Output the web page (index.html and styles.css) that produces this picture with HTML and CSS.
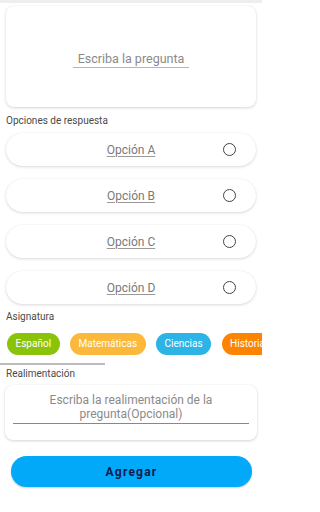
FILE: index.html
```html
<!DOCTYPE html>
<html lang="es">
<head>
<meta charset="utf-8">
<link rel="stylesheet" href="styles.css">
</head>
<body>
<div class="topbar"></div>
<main class="page">
  <section class="card question">
    <span class="field">Escriba la pregunta</span>
  </section>

  <div class="label label-options">Opciones de respuesta</div>

  <div class="options">
    <div class="option"><span class="opt-text">Opción A</span><span class="radio"></span></div>
    <div class="option"><span class="opt-text">Opción B</span><span class="radio"></span></div>
    <div class="option"><span class="opt-text">Opción C</span><span class="radio"></span></div>
    <div class="option"><span class="opt-text">Opción D</span><span class="radio"></span></div>
  </div>

  <div class="label label-subject">Asignatura</div>

  <div class="chips">
    <span class="chip green">Español</span>
    <span class="chip yellow">Matemáticas</span>
    <span class="chip blue">Ciencias</span>
    <span class="chip orange">Historia</span>
  </div>
  <div class="scrollbar"></div>

  <div class="label label-feedback">Realimentación</div>

  <section class="card feedback">
    <div class="field-wide">Escriba la realimentación de la<br>pregunta(Opcional)</div>
  </section>

  <button class="add">Agregar</button>
</main>
</body>
</html>
```

FILE: styles.css
```css
* { box-sizing: border-box; }
html, body {
  margin: 0;
  padding: 0;
  background: #ffffff;
  width: 262px;
  height: 512px;
  overflow: hidden;
  font-family: Roboto, "Noto Sans", "Liberation Sans", sans-serif;
}
.topbar {
  height: 3px;
  background: #eeeeee;
}
.page {
  display: flex;
  flex-direction: column;
}
.card {
  background: #fff;
  border-radius: 8px;
  box-shadow: 0 1px 3px rgba(0,0,0,0.16), 0 0 1px rgba(0,0,0,0.08);
}
.question {
  margin: 3px 6px 0 6px;
  height: 101px;
  display: flex;
  align-items: center;
  justify-content: center;
  padding-top: 5px;
}
.field {
  font-size: 12.5px;
  color: #8a8a8a;
  padding: 0 5px 1px;
  border-bottom: 1.5px solid #b5b5b5;
  line-height: 15px;
}
.label {
  font-size: 10px;
  color: #4a4a4a;
  padding-left: 6px;
  line-height: 12px;
}
.label-options { margin-top: 8px; }
.options {
  display: flex;
  flex-direction: column;
  gap: 13px;
  margin-top: 6px;
}
.option {
  margin: 0 6px;
  height: 33px;
  border-radius: 17px;
  background: #fff;
  box-shadow: 0 1px 3px rgba(0,0,0,0.15), 0 0 1px rgba(0,0,0,0.08);
  display: flex;
  align-items: center;
  justify-content: center;
  position: relative;
}
.opt-text {
  font-size: 12px;
  color: #7a7a7a;
  text-decoration: underline;
  text-underline-offset: 2px;
  text-decoration-color: #999;
}
.radio {
  position: absolute;
  right: 20px;
  top: 10px;
  width: 13px;
  height: 13px;
  border: 1.5px solid #444;
  border-radius: 50%;
}
.label-subject { margin-top: 7px; }
.chips {
  display: flex;
  gap: 10.5px;
  margin-top: 10px;
  padding-left: 7px;
  white-space: nowrap;
}
.chip {
  flex: none;
  height: 22px;
  line-height: 22px;
  border-radius: 11px;
  color: #fff;
  font-size: 10px;
  padding: 0 8.5px;
}
.green { background: #8bc30a; }
.yellow { background: #fbb83a; }
.blue { background: #2bb4e5; }
.orange { background: #fd8402; }
.scrollbar {
  width: 105px;
  height: 2px;
  background: #bdbdbd;
  margin-top: 8px;
}
.label-feedback { margin-top: 3px; }
.feedback {
  margin: 5px 5px 0 5px;
  height: 55px;
  padding: 8px 8px 0 8px;
}
.field-wide {
  font-size: 12px;
  line-height: 14px;
  color: #8a8a8a;
  text-align: center;
  border-bottom: 1px solid #888;
  padding-bottom: 2px;
}
.add {
  margin: 16px 10px 0 11px;
  height: 31px;
  border: none;
  border-radius: 16px;
  background: #03a9f9;
  color: #0d1a4f;
  font-family: Roboto, "Noto Sans", sans-serif;
  font-weight: bold;
  font-size: 12px;
  letter-spacing: 1.2px;
  box-shadow: 0 1px 2px rgba(0,0,0,0.2);
}
```
